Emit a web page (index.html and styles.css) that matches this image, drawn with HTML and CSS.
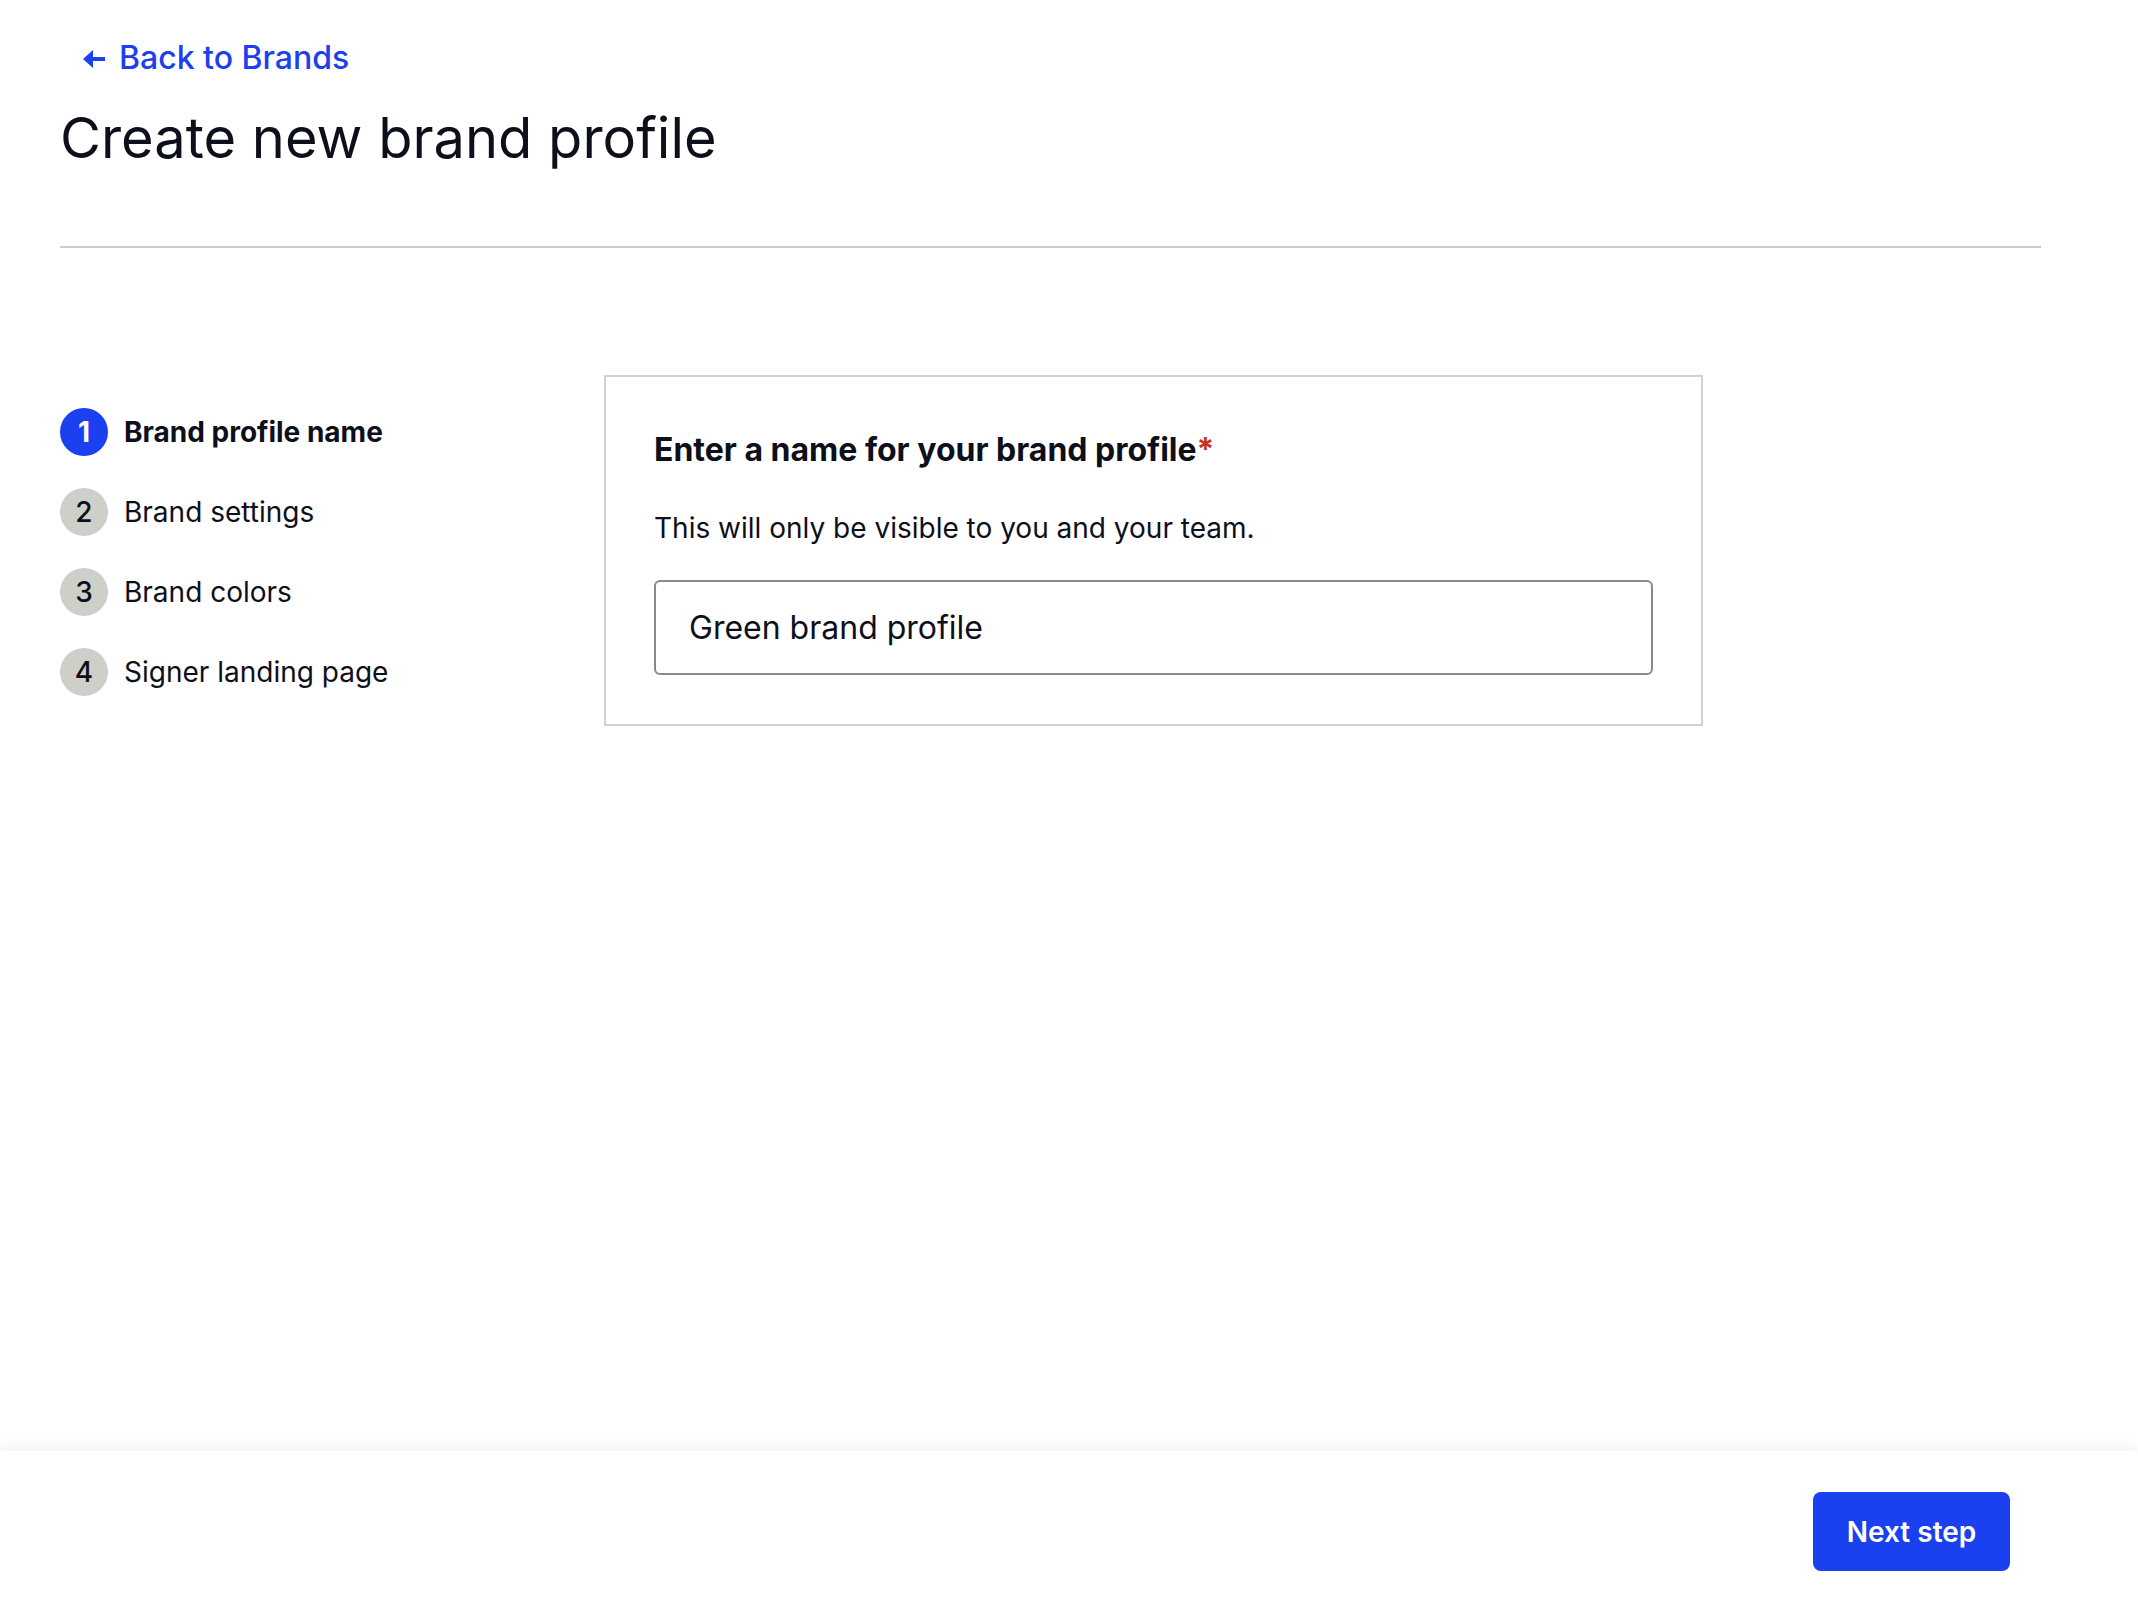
FILE: index.html
```html
<!DOCTYPE html>
<html lang="en">
<head>
<meta charset="utf-8">
<title>Create new brand profile</title>
<link rel="stylesheet" href="styles.css">
</head>
<body>
<div class="page">
  <header class="header">
    <a class="back-link" href="#">
      <svg class="back-icon" viewBox="0 0 22 18" width="22" height="18" aria-hidden="true">
        <path d="M0 9 L10 0 L10 7 L22 7 L22 11 L10 11 L10 18 Z" fill="currentColor"/>
      </svg>
      <span>Back to Brands</span>
    </a>
    <h1 class="title">Create new brand profile</h1>
    <hr class="divider">
  </header>

  <main class="main">
    <ol class="steps">
      <li class="step step-active"><span class="step-num">1</span><span class="step-label">Brand profile name</span></li>
      <li class="step"><span class="step-num">2</span><span class="step-label">Brand settings</span></li>
      <li class="step"><span class="step-num">3</span><span class="step-label">Brand colors</span></li>
      <li class="step"><span class="step-num">4</span><span class="step-label">Signer landing page</span></li>
    </ol>

    <section class="card">
      <h2 class="card-title">Enter a name for your brand profile<span class="required">*</span></h2>
      <p class="card-desc">This will only be visible to you and your team.</p>
      <input class="text-input" type="text" value="Green brand profile">
    </section>
  </main>

  <footer class="footer">
    <button class="btn-primary" type="button">Next step</button>
  </footer>
</div>
</body>
</html>
```

FILE: styles.css
```css
* { box-sizing: border-box; }

html, body {
  margin: 0;
  padding: 0;
  background: #ffffff;
}

body {
  font-family: Inter, "Noto Sans", "Liberation Sans", sans-serif;
  color: #0d0f1a;
}

.page {
  display: flex;
  flex-direction: column;
  min-height: 100vh;
}

.header {
  padding: 31px 97px 0 60px;
}

.back-link {
  display: inline-flex;
  align-items: center;
  gap: 14px;
  margin-left: 23px;
  color: #1b40f0;
  text-decoration: none;
  font-size: 32px;
  font-weight: 500;
  line-height: 54px;
}

.back-icon {
  display: block;
  margin-top: 2px;
}

.title {
  margin: 18px 0 0 0;
  font-size: 56px;
  font-weight: 400;
  line-height: 70px;
  color: #0d0f1a;
}

.divider {
  margin: 73px 0 0 0;
  border: 0;
  height: 2px;
  background: #cbcbc5;
}

.main {
  flex: 1;
  display: flex;
  align-items: flex-start;
  padding: 127px 0 0 60px;
}

.steps {
  list-style: none;
  margin: 33px 0 0 0;
  padding: 0;
  width: 544px;
  display: flex;
  flex-direction: column;
  gap: 32px;
}

.step {
  display: flex;
  align-items: center;
  gap: 16px;
  height: 48px;
}

.step-num {
  width: 48px;
  height: 48px;
  border-radius: 50%;
  background: #cfcfc9;
  color: #0d0f1a;
  display: flex;
  align-items: center;
  justify-content: center;
  font-size: 28px;
  font-weight: 500;
}

.step-label {
  font-size: 28px;
  font-weight: 400;
}

.step-active .step-num {
  background: #1b40f0;
  color: #ffffff;
  font-weight: 700;
}

.step-active .step-label {
  font-weight: 700;
}

.card {
  width: 1099px;
  border: 2px solid #d3d3cd;
  padding: 53px 48px 49px 48px;
}

.card-title {
  margin: 0;
  font-size: 32px;
  font-weight: 700;
  line-height: 40px;
}

.required {
  color: #c8321e;
}

.card-desc {
  margin: 37px 0 0 0;
  font-size: 28px;
  line-height: 42px;
}

.text-input {
  display: block;
  width: 100%;
  height: 95px;
  margin-top: 31px;
  padding: 0 33px;
  border: 2px solid #8a8a84;
  border-radius: 6px;
  font-family: inherit;
  font-size: 32px;
  color: #0d0f1a;
  background: #ffffff;
  outline: none;
}

.footer {
  height: 157px;
  display: flex;
  justify-content: flex-end;
  align-items: flex-start;
  padding: 41px 128px 0 0;
  background: #ffffff;
  box-shadow: 0 -4px 14px rgba(0, 0, 0, 0.06);
}

.btn-primary {
  height: 79px;
  width: 197px;
  padding: 0;
  border: 0;
  border-radius: 8px;
  background: #1b40f0;
  color: #ffffff;
  font-family: inherit;
  font-size: 28px;
  font-weight: 600;
  cursor: pointer;
}
```
